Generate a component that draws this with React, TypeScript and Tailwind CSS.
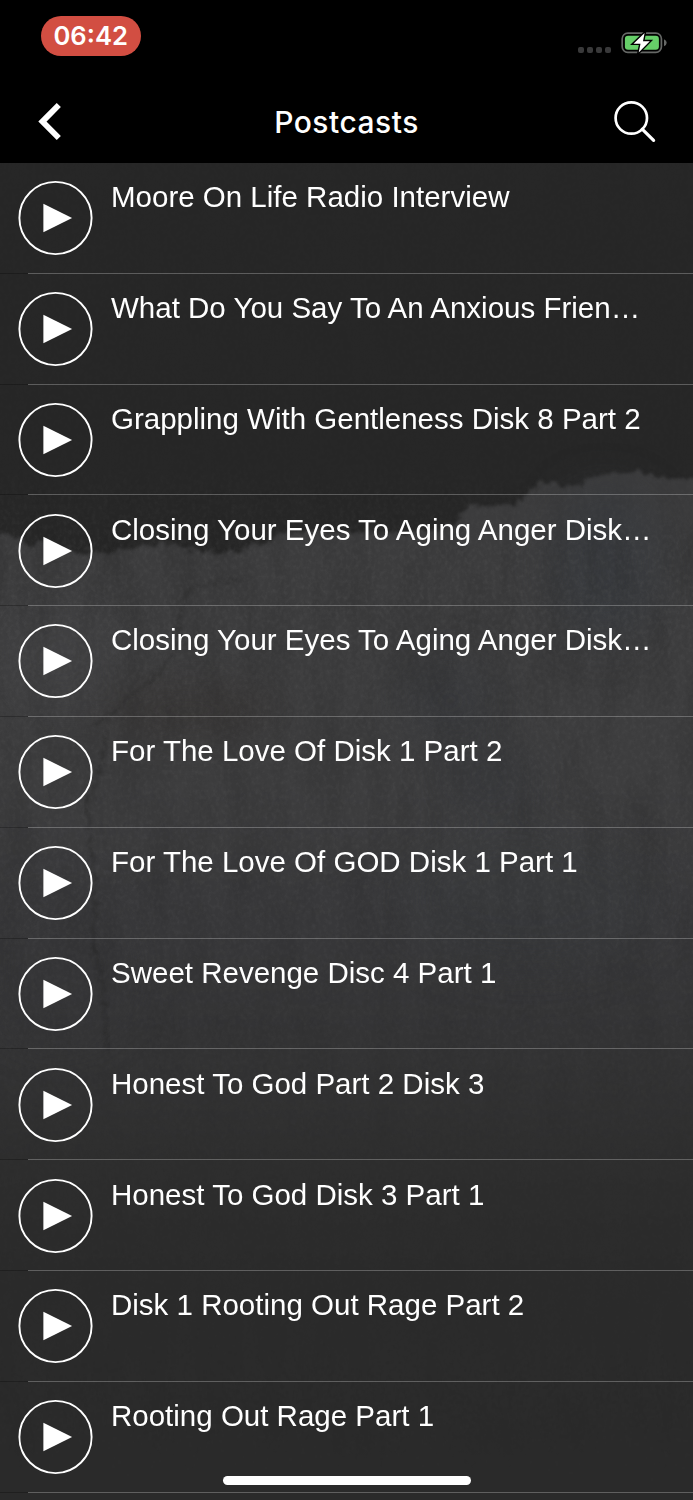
const episodes = [
  { title: 'Moore On Life Radio Interview' },
  { title: 'What Do You Say To An Anxious Frien…' },
  { title: 'Grappling With Gentleness Disk 8 Part 2' },
  { title: 'Closing Your Eyes To Aging Anger Disk…' },
  { title: 'Closing Your Eyes To Aging Anger Disk…' },
  { title: 'For The Love Of Disk 1 Part 2' },
  { title: 'For The Love Of GOD Disk 1 Part 1' },
  { title: 'Sweet Revenge Disc 4 Part 1' },
  { title: 'Honest To God Part 2 Disk 3' },
  { title: 'Honest To God Disk 3 Part 1' },
  { title: 'Disk 1 Rooting Out Rage Part 2' },
  { title: 'Rooting Out Rage Part 1' },
];

/* Torn concrete texture behind the list */
function Backdrop() {
  return (
    <svg className="absolute inset-0 -z-10" width="693" height="1500" viewBox="0 0 693 1500" aria-hidden="true">
      <defs>
        <linearGradient id="wall" gradientUnits="userSpaceOnUse" x1="0" y1="470" x2="0" y2="1500">
          <stop offset="0" stopColor="#3c3c3d" />
          <stop offset="0.3" stopColor="#3d3d3e" />
          <stop offset="0.44" stopColor="#38383a" />
          <stop offset="0.57" stopColor="#333334" />
          <stop offset="0.67" stopColor="#2e2e2e" />
          <stop offset="0.78" stopColor="#2b2b2b" />
          <stop offset="1" stopColor="#2a2a2a" />
        </linearGradient>
        <linearGradient id="fade" x1="0" y1="0" x2="0" y2="1">
          <stop offset="0" stopColor="#fff" stopOpacity="0.1" />
          <stop offset="0.31" stopColor="#fff" stopOpacity="0.12" />
          <stop offset="0.37" stopColor="#fff" />
          <stop offset="0.6" stopColor="#fff" stopOpacity="0.8" />
          <stop offset="0.78" stopColor="#fff" stopOpacity="0.1" />
          <stop offset="1" stopColor="#fff" stopOpacity="0" />
        </linearGradient>
        <mask id="grainMask">
          <rect width="693" height="1500" fill="url(#fade)" />
        </mask>
        <filter id="torn" x="-5%" y="-5%" width="110%" height="110%" colorInterpolationFilters="sRGB">
          <feTurbulence type="fractalNoise" baseFrequency="0.12" numOctaves="3" seed="4" />
          <feDisplacementMap in="SourceGraphic" scale="14" xChannelSelector="R" yChannelSelector="G" />
          <feGaussianBlur stdDeviation="1.8" />
        </filter>
        <filter id="grain" x="0" y="0" width="100%" height="100%" colorInterpolationFilters="sRGB">
          <feTurbulence type="fractalNoise" baseFrequency="0.25 0.2" numOctaves="3" seed="8" />
          <feColorMatrix values="0 0 0 0 0.5  0 0 0 0 0.5  0 0 0 0 0.5  0.7 0 0 0 -0.27" />
        </filter>
        <filter id="streak" x="0" y="0" width="100%" height="100%" colorInterpolationFilters="sRGB">
          <feTurbulence type="fractalNoise" baseFrequency="0.035 0.01" numOctaves="4" seed="15" />
          <feColorMatrix values="0 0 0 0 0.08  0 0 0 0 0.08  0 0 0 0 0.08  0 1 0 0 -0.38" />
        </filter>
        <filter id="soft" x="-50%" y="-50%" width="200%" height="200%" colorInterpolationFilters="sRGB">
          <feGaussianBlur stdDeviation="22" />
        </filter>
      </defs>
      <rect width="693" height="1500" fill="#272727" />
      <path
        filter="url(#torn)"
        fill="url(#wall)"
        d="M-20 532L10 535L24 542L33 547L38 541L55 547L76 551L105 552L130 548L165 543L180 547L215 552L240 550L262 545L280 534L310 530L345 532L403 533L435 531L455 521L462 512L480 504L505 505L522 500L532 489L542 482L560 485L575 488L590 480L607 474L632 470L650 474L670 479L720 477V1530H-20Z"
      />
      <g filter="url(#soft)">
        <ellipse cx="605" cy="565" rx="55" ry="75" fill="#373a3f" opacity="0.6" />
        <ellipse cx="450" cy="700" rx="50" ry="40" fill="#333539" opacity="0.5" />
        <ellipse cx="490" cy="780" rx="50" ry="35" fill="#35383c" opacity="0.4" />
        <ellipse cx="60" cy="655" rx="60" ry="60" fill="#434345" opacity="0.5" />
        <ellipse cx="190" cy="710" rx="90" ry="22" fill="#343230" opacity="0.7" />
        <ellipse cx="60" cy="970" rx="70" ry="70" fill="#353538" opacity="0.5" />
        <ellipse cx="530" cy="900" rx="130" ry="70" fill="#3a3b3e" opacity="0.4" />
      </g>
      <path
        d="M240 580Q202 582 188 591Q179 610 174 650Q160 672 145 688Q126 695 115 713L96 724"
        fill="none"
        stroke="#2c2c2c"
        strokeWidth="2.2"
        opacity="0.7"
        filter="url(#torn)"
      />
      <path
        d="M108 727Q103 770 86 808Q96 870 95 915L93 950Q104 970 107 1050"
        fill="none"
        stroke="#2a2a2a"
        strokeWidth="2"
        opacity="0.7"
        filter="url(#torn)"
      />
      <g mask="url(#grainMask)">
        <rect width="693" height="1500" filter="url(#grain)" opacity="0.34" />
        <rect width="693" height="1500" filter="url(#streak)" opacity="0.3" />
      </g>
    </svg>
  );
}

function BatteryIcon() {
  return (
    <svg width="46" height="28" viewBox="620 28 46 28" className="overflow-visible">
      <rect x="622.2" y="33.1" width="39.2" height="19.3" rx="5.6" fill="none" stroke="#666866" strokeWidth="1.7" />
      <path d="M664 39.2Q666.7 40.4 666.7 42.7T664 46.2Z" fill="#666866" />
      <rect x="624.9" y="35.8" width="34" height="14" rx="3.2" fill="#66cf69" />
      <path
        d="M644.6 33L633.5 43.7H640.5L638.7 52.4L649.8 41.2H643Z"
        fill="#fff"
        stroke="#000"
        strokeWidth="2.8"
        paintOrder="stroke"
      />
    </svg>
  );
}

function PlayIcon() {
  return (
    <svg width="76" height="76" viewBox="0 0 76 76" className="shrink-0">
      <circle cx="37.5" cy="38" r="36.1" fill="none" stroke="#fff" strokeWidth="1.9" />
      <path d="M25.4 23.8L54.1 38L25.4 52.3Z" fill="#fff" />
    </svg>
  );
}

export default function App() {
  return (
    <div className="relative isolate flex h-[1500px] w-[693px] flex-col overflow-hidden bg-[#272727] font-['Liberation_Sans',Arial,sans-serif] text-white">
      <Backdrop />

      <header className="flex h-[162.6px] shrink-0 flex-col bg-black font-['Inter',sans-serif]">
        <div className="flex h-[82px] items-start justify-between pt-4 pr-[27px] pl-[40.7px]">
          <div className="flex h-[39.5px] w-[100px] items-center justify-center rounded-full bg-[#d24e42] pt-px text-[25.6px] leading-none font-semibold">
            06:42
          </div>
          <div className="flex items-start gap-[9.5px] pt-3">
            <div className="flex gap-[2.7px] pt-[18.5px]">
              <span className="size-[6px] rounded-[2px] bg-[#39393a]" />
              <span className="size-[6px] rounded-[2px] bg-[#39393a]" />
              <span className="size-[6px] rounded-[2px] bg-[#39393a]" />
              <span className="size-[6px] rounded-[2px] bg-[#39393a]" />
            </div>
            <BatteryIcon />
          </div>
        </div>
        <div className="grid h-20 grid-cols-[1fr_auto_1fr] items-center px-[36px]">
          <button aria-label="Back" className="justify-self-start">
            <svg width="28" height="44" viewBox="36 100 28 44">
              <path d="M58.8 105L42.4 121.6L58.8 138" fill="none" stroke="#fff" strokeWidth="5.8" />
            </svg>
          </button>
          <h1 className="text-[30px] leading-none font-medium tracking-[0.5px]">Postcasts</h1>
          <button aria-label="Search" className="justify-self-end">
            <svg width="46" height="46" viewBox="611 99 46 46">
              <circle cx="631.3" cy="118" r="15.7" fill="none" stroke="#fff" strokeWidth="2.7" />
              <path d="M642.2 129.2L653.6 140.4" stroke="#fff" strokeWidth="3.2" strokeLinecap="round" />
            </svg>
          </button>
        </div>
      </header>

      <ul className="flex flex-col pt-[0.3px]">
        {episodes.map((episode, i) => (
          <li key={i} className="flex h-[110.82px] shrink-0 flex-col justify-between">
            <div className="flex items-start gap-[17.5px] pt-[17.35px] pl-[17.5px]">
              <PlayIcon />
              <p className="text-[29.5px] leading-[34px] whitespace-nowrap">{episode.title}</p>
            </div>
            <div className="flex h-px">
              <span className="w-7 bg-black/25" />
              <span className="flex-1 bg-white/25" />
            </div>
          </li>
        ))}
      </ul>

      <div className="absolute top-[1475.7px] left-[223px] h-[9.3px] w-[247.5px] rounded-full bg-white" />
    </div>
  );
}
